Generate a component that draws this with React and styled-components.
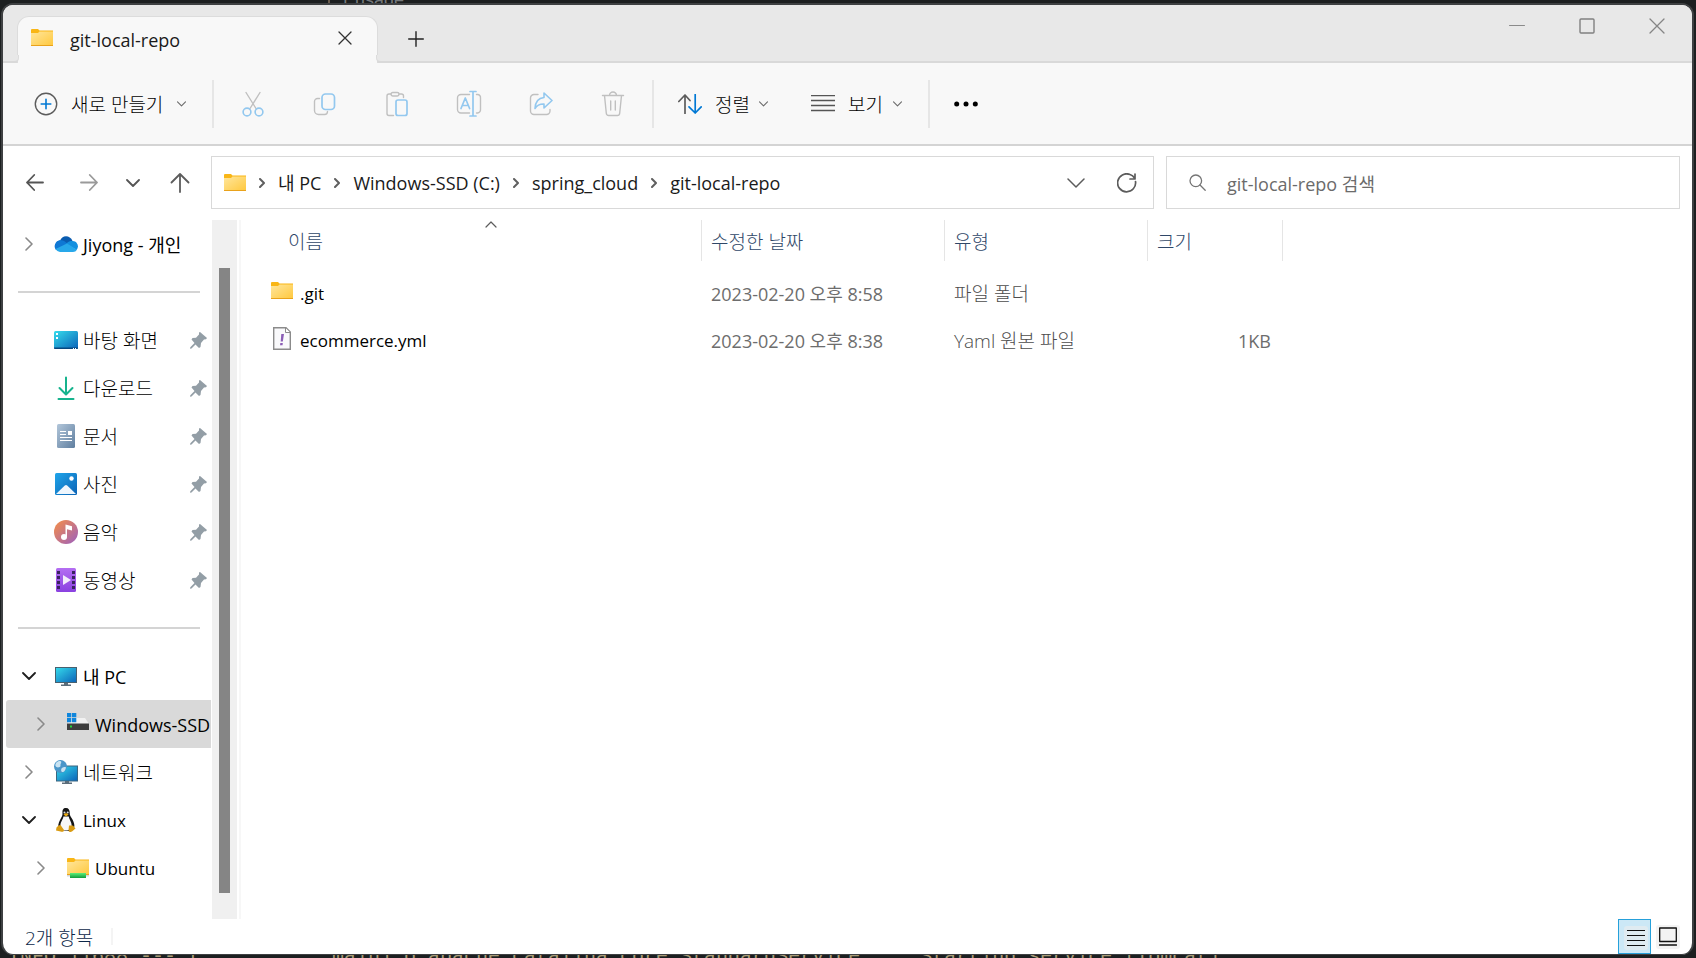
import React from "react";
import styled, { createGlobalStyle } from "styled-components";

const GlobalStyle = createGlobalStyle`
  *, *::before, *::after { box-sizing: border-box; }
  body {
    margin: 0;
    background: #1c1f20;
    color: #1a1a1a;
    font: 18px/24px "Open Sans", "Noto Sans CJK KR", sans-serif;
  }
  button, input { font: inherit; color: inherit; }
  button { margin: 0; padding: 0; border: 0; background: none; }
  ul { list-style: none; margin: 0; padding: 0; }
  svg { display: block; flex: none; }
`;

/* ---------- Desktop and window frame ---------- */

const Desktop = styled.div`
  position: relative;
  display: flex;
  min-height: 100vh;
  padding: 3px 2px 3px 1px;
  overflow: hidden;
`;

const ConsoleLine = styled.pre`
  position: absolute;
  bottom: -11px;
  left: 8px;
  margin: 0;
  color: #a89c78;
  font: 20px/24px "Liberation Mono", monospace;
`;

const UsageHint = styled.span`
  position: absolute;
  top: -12px;
  left: 328px;
  padding-left: 10px;
  border-left: 2px solid #6a5c4e;
  color: #75797c;
  font: 18px/24px "Liberation Sans", sans-serif;
`;

const Window = styled.main`
  position: relative;
  flex: 1;
  min-width: 0;
  display: flex;
  flex-direction: column;
  border: 2px solid #3e4042;
  border-bottom-width: 1px;
  border-radius: 12px;
  background: #fff;
  overflow: hidden;
`;

/* ---------- Title bar ---------- */

const TitleBar = styled.header`
  display: flex;
  height: 58px;
  padding: 11px 0 0 14px;
  border-bottom: 2px solid #d9d9d9;
  background: #e8e8e8;
`;

const Tab = styled.div`
  position: relative;
  display: flex;
  align-items: center;
  width: 361px;
  height: 47px;
  padding: 0 25px 4px 13px;
  border: 1px solid #dcdcdc;
  border-bottom: 0;
  border-radius: 12px 12px 0 0;
  background: #f8f8f8;
  &::before, &::after {
    content: "";
    position: absolute;
    bottom: 0;
    width: 5px;
    height: 8px;
    border-bottom: 2px solid #d9d9d9;
    background: #e8e8e8;
  }
  &::before { left: -4px; border-right: 1px solid #dcdcdc; border-bottom-right-radius: 5px; }
  &::after { right: -4px; border-left: 1px solid #dcdcdc; border-bottom-left-radius: 5px; }
`;

const TabTitle = styled.span`
  flex: 1;
  margin-left: 17px;
  padding-top: 4px;
`;

const NewTabButton = styled.button`
  display: grid;
  place-items: center;
  width: 48px;
  height: 46px;
  margin-left: 14px;
`;

const WindowControls = styled.div`
  display: flex;
  gap: 54px;
  margin: 2px 27px 0 auto;
  height: 16px;
`;

/* ---------- Command bar ---------- */

const Toolbar = styled.div`
  display: flex;
  align-items: center;
  height: 83px;
  border-bottom: 2px solid #d4d4d4;
  background: #f8f8f8;
`;

const MenuButton = styled.button`
  display: flex;
  align-items: center;
  width: ${(p) => p.$width}px;
  height: 48px;
  padding: 0 26px 0 ${(p) => p.$inset}px;
  color: #000;
  font-size: 19px;
  font-weight: 300;
  text-align: left;
  white-space: nowrap;
`;

const MenuLabel = styled.span`
  flex: 1;
  padding: 2px 0 0 13px;
`;

const ToolGroup = styled.div`
  display: flex;
  padding: 0 3px;
`;

const ToolButton = styled.button`
  display: grid;
  place-items: center;
  width: 72px;
  height: 48px;
`;

const ToolSeparator = styled.div`
  width: 2px;
  height: 48px;
  background: #e6e6e6;
`;

/* ---------- Navigation row ---------- */

const NavRow = styled.div`
  display: flex;
  padding: 10px 12px 11px 6px;
`;

const NavButtons = styled.div`
  display: grid;
  grid-template-columns: 52px 56px 32px 62px;
  align-items: center;
  justify-items: center;
`;

const AddressBar = styled.nav`
  flex: 913 1 0;
  display: flex;
  align-items: center;
  height: 53px;
  padding: 0 16px 0 12px;
  border: 1px solid #d9d9d9;
  white-space: nowrap;
`;

const Crumb = styled.a`
  margin: 0 13px;
  color: #1a1a1a;
  text-decoration: none;
`;

const CrumbStart = styled.span`
  margin-right: 13px;
`;

const AddressTools = styled.div`
  display: flex;
  gap: 32px;
  margin-left: auto;
`;

const SearchBox = styled.label`
  flex: 490 1 0;
  display: flex;
  align-items: center;
  gap: 21px;
  height: 53px;
  margin-left: 12px;
  padding-left: 22px;
  border: 1px solid #d9d9d9;
`;

const SearchInput = styled.input`
  flex: 1;
  min-width: 0;
  height: 30px;
  padding: 3px 0 0;
  border: 0;
  outline: 0;
  background: none;
  &::placeholder { color: #6b6b6b; opacity: 1; }
`;

/* ---------- Body ---------- */

const Body = styled.div`
  flex: 1;
  display: flex;
  min-height: 0;
`;

const Sidebar = styled.nav`
  width: 209px;
  padding: 0 1px 27px 3px;
  overflow: hidden;
`;

const TreeRow = styled.li`
  display: flex;
  align-items: center;
  height: 48px;
  padding: 0 ${(p) => (p.$nested ? 0 : 4)}px 0 ${(p) => (p.$nested ? 27 : 15)}px;
  border-radius: 3px 0 0 3px;
  background: ${(p) => (p.$selected ? "#d9d9d9" : "transparent")};
  color: #000;
`;

const TreeToggle = styled.button`
  flex: none;
  display: grid;
  place-items: center;
  width: 16px;
  height: 24px;
`;

const TreeIcon = styled.span`
  flex: none;
  display: grid;
  place-items: center;
  width: 24px;
  height: 24px;
  margin: 0 5px 0 ${(p) => (p.$alone ? 33 : 17)}px;
`;

const TreeLink = styled.a`
  flex: 1;
  min-width: 0;
  padding-top: 2px;
  color: inherit;
  text-decoration: none;
  white-space: nowrap;
  font-size: ${(p) => p.$size}px;
  font-weight: ${(p) => (p.$size === 19 ? 300 : 400)};
`;

const TreeDivider = styled.li`
  height: 48px;
  padding: 23px 11px 0 12px;
  &::before {
    content: "";
    display: block;
    height: 2px;
    background: #d4d4d4;
  }
`;

const ScrollTrack = styled.div`
  width: 25px;
  padding: 48px 7px 26px;
  background: #f0f0f0;
`;

const ScrollThumb = styled.div`
  width: 11px;
  height: 100%;
  background: #858585;
`;

const FilePane = styled.section`
  flex: 1;
  min-width: 0;
  margin-left: 2px;
  border-left: 2px solid #f7f7f7;
`;

const FileTable = styled.table`
  width: 100%;
  table-layout: fixed;
  border-collapse: separate;
  border-spacing: 0;
  color: #6d6d6d;
`;

const HeadCell = styled.th`
  position: relative;
  height: 41px;
  padding: 2px 0 0 ${(p) => (p.$first ? 47 : 9)}px;
  border-right: ${(p) => (p.$last ? 0 : 1)}px solid #e5e5e5;
  color: #2f4768;
  font-size: 19px;
  font-weight: 300;
  text-align: left;
`;

const SortCaret = styled.span`
  position: absolute;
  top: 1px;
  left: 244px;
`;

const HeadGap = styled.tr`
  height: 9px;
`;

const Cell = styled.td`
  height: 47px;
  padding: 0 12px 0 9px;
  color: ${(p) => (p.$size === 19 ? "#4c4c4c" : "inherit")};
  text-align: ${(p) => (p.$right ? "right" : "left")};
  font-size: ${(p) => p.$size || 18}px;
  font-weight: ${(p) => (p.$size === 19 ? 300 : 400)};
  white-space: nowrap;
`;

const FileName = styled.div`
  display: flex;
  align-items: center;
  gap: 6px;
  padding-left: 20px;
  color: #000;
  & > span { display: grid; place-items: center; width: 24px; height: 28px; }
  & > span > svg { margin-top: -5px; }
`;

/* ---------- Status bar ---------- */

const StatusBar = styled.footer`
  display: flex;
  align-items: center;
  height: 35px;
  padding: 0 12px 0 22px;
  color: #0c2748;
  font-size: 19px;
  font-weight: 300;
`;

const StatusText = styled.span`
  padding-top: 2px;
`;

const StatusDivider = styled.div`
  width: 2px;
  height: 17px;
  margin-left: 18px;
  background: #f4f4f4;
`;

const ViewModes = styled.div`
  display: flex;
  align-items: center;
  gap: 5px;
  margin-left: auto;
`;

const ViewButton = styled.button`
  display: grid;
  place-items: center;
  width: ${(p) => (p.$active ? 33 : 24)}px;
  height: ${(p) => (p.$active ? 35 : 24)}px;
  border: ${(p) => (p.$active ? "1px solid #26a0da" : "0")};
  border-radius: ${(p) => (p.$active ? 0 : 3)}px;
  background: ${(p) => (p.$active ? "#cce8f6" : "#f3f3f3")};
`;

const ViewGlyph = styled.span`
  display: grid;
  place-items: center;
  width: 24px;
  height: 24px;
  margin: 3px 0 0 2px;
  border-radius: 3px;
  background: #dfebf1;
`;

/* ---------- Icons ---------- */

const Line = ({ w, h = w, color = "#5c5c5c", sw = 1.4, d, children }) => (
  <svg width={w} height={h} viewBox={`0 0 ${w} ${h}`} fill="none" stroke={color}
    strokeWidth={sw} strokeLinecap="round" strokeLinejoin="round" aria-hidden="true">
    {d && <path d={d} />}
    {children}
  </svg>
);

const FolderIcon = ({ drive }) => (
  <svg width="22" height={drive ? 20 : 18} viewBox={drive ? "0 0 22 20" : "0 0 22 18"} aria-hidden="true">
    <defs>
      <linearGradient id="folder" x1="0" y1="0" x2="1" y2="1">
        <stop offset="0" stopColor="#ffe69c" /><stop offset="1" stopColor="#ffc83d" />
      </linearGradient>
      <linearGradient id="pipe" x1="0" y1="0" x2="0" y2="1">
        <stop offset="0" stopColor="#5df07a" /><stop offset="1" stopColor="#109a3c" />
      </linearGradient>
    </defs>
    <path d="M0 1q0-1 1-1h6l1.500 1.500H22V5H0z" fill="#f9b616" />
    <path d="M0 4h7l1.500-1.500H22V17H0z" fill="url(#folder)" />
    <path d="M0 16h22v1H0z" fill="#e9a21b" />
    {drive && <><path d="M0 17h22v1.500H0z" fill="#d4d7da" /><path d="M3 15h16v5H3z" fill="url(#pipe)" /></>}
  </svg>
);

const YamlIcon = () => (
  <svg width="18" height="23" viewBox="0 0 18 23" aria-hidden="true">
    <path d="M.7.7H13l4.300 4.300v17.300H.7z" fill="#f9f9fb" stroke="#8b8b8b" strokeWidth="1.400" />
    <path d="M12.500 1v4.500H17" fill="#fff" stroke="#8b8b8b" />
    <path d="M8.300 7h2.700l-1.200 7.500H7.700z" fill="#8a5db5" />
    <path d="M7.300 16h2.500l-.3 2.300H7z" fill="#8a5db5" />
  </svg>
);

const ChevronRight = ({ color = "#8a8a8a" }) => <Line w={8} h={14} color={color} sw={1.6} d="M1 1l6 6-6 6" />;
const ChevronOpen = () => <Line w={14} h={8} color="#1f1f1f" sw={1.8} d="M1 1l6 6 6-6" />;
const CrumbChevron = () => <Line w={6} h={10} color="#5f5f5f" sw={2} d="M1 1l4 4-4 4" />;
const SmallChevron = () => <Line w={9} h={6} color="#6b6b6b" sw={1.1} d="M.5.8l4 4 4-4" />;
const CloseIcon = ({ size, color }) => <Line w={size} color={color} sw={1.3} d={`M1 1l${size - 2} ${size - 2}M${size - 1} 1L1 ${size - 1}`} />;

const NewIcon = () => (
  <Line w={24}><circle cx="12" cy="12" r="10.700" /><path d="M12 7.200v9.600M7.200 12h9.600" stroke="#0078d4" strokeWidth="1.600" /></Line>
);

const GREY = "#c0c0c0";
const BLUE = "#93c8ef";

const CutIcon = () => (
  <Line w={24} h={26} color={GREY}>
    <path d="M5 1.500l10.300 16.500M19 1.500L8.700 18" />
    <g stroke={BLUE} strokeWidth="1.600"><circle cx="6" cy="21" r="3.900" /><circle cx="18" cy="21" r="3.900" /></g>
  </Line>
);
const CopyIcon = () => (
  <Line w={24} color={GREY}>
    <path d="M6.500 6.500h-2a3 3 0 0 0-3 3v9a4 4 0 0 0 4 4h6a3 3 0 0 0 3-3" />
    <rect x="9" y="2" width="12.500" height="15.500" rx="3.500" stroke={BLUE} strokeWidth="1.700" />
  </Line>
);
const PasteIcon = () => (
  <Line w={24} h={26} color={GREY}>
    <path d="M6 3H4a2 2 0 0 0-2 2v17.500a2 2 0 0 0 2 2h4.500M14 3h2.500a2 2 0 0 1 2 2v1.500" />
    <rect x="6" y="1.500" width="8" height="3.500" rx="1.700" />
    <rect x="11" y="9" width="11" height="15.500" rx="2" stroke={BLUE} strokeWidth="1.700" />
  </Line>
);
const RenameIcon = () => (
  <Line w={26} h={28} color={GREY}>
    <path d="M13.500 4.500H5A3.500 3.500 0 0 0 1.500 8v11.500A3.500 3.500 0 0 0 5 23h8.500M20.500 4.500h1A3 3 0 0 1 24.500 8v11.500a3.200 3.200 0 0 1-3 3.500h-1" />
    <path d="M14 1.500h6M17 1.500v24.500M14 26h6M5 18.500L9.300 8l4.300 10.500M6.500 15.500h5.700" stroke={BLUE} strokeWidth="1.700" />
  </Line>
);
const ShareIcon = () => (
  <Line w={24} h={26} color={GREY}>
    <path d="M9 3.500H5A3.500 3.500 0 0 0 1.500 7v13A3.500 3.500 0 0 0 5 23.500h12.500a3.500 3.500 0 0 0 3.500-3.500v-1.500" />
    <path d="M15 2l8 7.500-8 7.500v-4c-4-.2-7 1.300-9 4.500.300-6.500 3.500-10.500 9-11z" stroke={BLUE} strokeWidth="1.600" />
  </Line>
);
const TrashIcon = () => (
  <Line w={24} h={26} color={GREY}>
    <path d="M1.500 4.500h21M8.500 4.500a3.500 3.500 0 0 1 7 0M3.500 4.500l1.800 17.800a2.400 2.400 0 0 0 2.400 2.200h8.600a2.400 2.400 0 0 0 2.400-2.200l1.800-17.800M9.700 10v9M14.300 10v9" />
  </Line>
);
const SortIcon = () => (
  <Line w={24} h={20} sw={1.7}>
    <path d="M7 19.500V1M.8 7.500L7 1l5 5.500" />
    <path d="M17.200.5V19M11 12.800l6.200 6.200 6-6.200" stroke="#0078d4" />
  </Line>
);
const LinesIcon = ({ w, h, color, thickness }) => (
  <svg width={w} height={h} viewBox={`0 0 ${w} ${h}`} stroke={color} strokeWidth={thickness} aria-hidden="true">
    {[0, 1, 2, 3].map((i) => <path key={i} d={`M0 ${0.5 + i * 5}h${w}`} />)}
  </svg>
);

const ArrowIcon = ({ color, flip }) => <Line w={18} h={17} color={color} sw={1.8} d={flip ? "M1 8.500h16M9.800 1l7.200 7.500-7.200 7.500" : "M17 8.500H1M8.200 1L1 8.500 8.200 16"} />;

const OneDriveIcon = () => (
  <svg width="24" height="16" viewBox="0 0 24 16" aria-hidden="true">
    <path d="M6 5C7.500-1 16-1.500 18.500 5l-5 5z" fill="#0a5cb0" />
    <path d="M6 4.300A6 6 0 0 0 2 14l10-5z" fill="#0f78d4" />
    <path d="M6 4.300c3-.5 5 1 8 4L3 14A6 6 0 0 1 6 4.300z" fill="#0f78d4" />
    <path d="M18.500 5a5.400 5.400 0 0 1 4 9L12 8c2-2.500 4-3 6.500-3z" fill="#1490df" />
    <path d="M1.500 13L13 7.500 23 13.700A5 5 0 0 1 19 16H6a6 6 0 0 1-4.500-3z" fill="#28a8ea" />
  </svg>
);
const ScreenGradient = () => (
  <defs><linearGradient id="screen" x1="0" y1="0" x2="1" y2="1"><stop offset="0" stopColor="#35dcec" /><stop offset="1" stopColor="#0b62b8" /></linearGradient></defs>
);
const DesktopIcon = () => (
  <svg width="24" height="18" viewBox="0 0 24 18" aria-hidden="true">
    <ScreenGradient />
    <rect width="24" height="18" rx="1.500" fill="url(#screen)" />
    <path d="M0 16.500h24V17a1 1 0 0 1-1 1H1a1 1 0 0 1-1-1z" fill="#07477f" />
    <path d="M2 2h2v2H2zM2 6h2v2H2zM19 17h1v1h-1zM21 17h1v1h-1z" fill="#fff" />
  </svg>
);
const DownloadIcon = () => <Line w={18} h={24} color="#16b38d" sw={2} d="M9 1.500V18M2.500 12L9 18.500l6.500-6.500M1.500 23h15" />;
const DocumentIcon = () => (
  <svg width="18" height="24" viewBox="0 0 18 24" aria-hidden="true">
    <defs><linearGradient id="doc" x1="0" y1="0" x2="1" y2="1"><stop offset="0" stopColor="#b2c6da" /><stop offset="1" stopColor="#5f7e9f" /></linearGradient></defs>
    <rect width="18" height="24" rx="1.500" fill="url(#doc)" />
    <path d="M3 7h6v1H3zM3 10h6v1H3zM3 13h12v1H3zM3 16h12v1H3zM11 7h4v4h-4z" fill="#fff" />
  </svg>
);
const PictureIcon = () => (
  <svg width="22" height="22" viewBox="0 0 22 22" aria-hidden="true">
    <defs><linearGradient id="pic" x1="0" y1="0" x2="1" y2="1"><stop offset="0" stopColor="#1fa5ea" /><stop offset="1" stopColor="#0b63b5" /></linearGradient></defs>
    <rect width="22" height="22" rx="1.500" fill="url(#pic)" />
    <path d="M1 21l8.800-8.500q1.200-1 2.400 0L21 21z" fill="#eef6fd" />
    <circle cx="16.500" cy="5.500" r="2.200" fill="#fff" />
  </svg>
);
const MusicIcon = () => (
  <svg width="24" height="24" viewBox="0 0 24 24" aria-hidden="true">
    <defs><linearGradient id="mus" x1="0" y1="0" x2="1" y2="1"><stop offset="0" stopColor="#f78f45" /><stop offset="1" stopColor="#9b5fc0" /></linearGradient></defs>
    <circle cx="12" cy="12" r="12" fill="url(#mus)" />
    <circle cx="10" cy="17" r="3" fill="#fff" />
    <path d="M11.500 17V4.500l6.500 1.700v4.300l-5-1.300V17z" fill="#fff" />
  </svg>
);
const VideoIcon = () => (
  <svg width="20" height="24" viewBox="0 0 20 24" aria-hidden="true">
    <defs><linearGradient id="vid" x1="0" y1="0" x2="0" y2="1"><stop offset="0" stopColor="#b46ef2" /><stop offset="1" stopColor="#8a41e0" /></linearGradient></defs>
    <rect width="20" height="24" rx="1.500" fill="url(#vid)" />
    {[3, 8, 13, 18].map((y) => <path key={y} d={`M1 ${y}h3v3H1zM16 ${y}h3v3h-3z`} fill="#3a2360" />)}
    <path d="M7 7l8 5-8 5z" fill="#f3ecfb" />
  </svg>
);
const MonitorIcon = () => (
  <svg width="22" height="19" viewBox="0 0 22 19" aria-hidden="true">
    <ScreenGradient />
    <rect x=".5" y=".5" width="21" height="15" fill="url(#screen)" stroke="#48606f" />
    <path d="M9 16h4v1.500h3V19H6v-1.500h3z" fill="#5c6d7a" />
  </svg>
);
const DriveIcon = () => (
  <svg width="22" height="22" viewBox="0 0 22 22" aria-hidden="true">
    <path d="M3 7l2-2h13l4 6H0z" fill="#f1f1f1" />
    <path d="M0 10.500h22V17H0z" fill="#3d3d3d" />
    <path d="M3 12.500h2v2H3z" fill="#23d43a" />
    <path d="M0 0h4.300v4.300H0zM5 0h4.300v4.300H5zM0 5h4.300v4.300H0zM5 5h4.300v4.300H5z" fill="#0f86dc" />
  </svg>
);
const NetworkIcon = () => (
  <svg width="24" height="24" viewBox="0 0 24 24" aria-hidden="true">
    <ScreenGradient />
    <rect x="2.500" y="6" width="21" height="15" fill="url(#screen)" stroke="#3c6680" />
    <path d="M11 21h4v1.500h3V24H8v-1.500h3z" fill="#5c6d7a" />
    <circle cx="6.500" cy="6.500" r="6.500" fill="#4a96c9" />
    <path d="M2 3c2-2 4-2.500 5-1.500S6 4 6.500 5.500 4 8 2.500 7 1 5 2 3zM8 8c2-1.500 4-1 4-.5s-1 4-3 4.500-2.500-3-1-4z" fill="#c9e3f2" />
  </svg>
);
const TuxIcon = () => (
  <svg width="20" height="24" viewBox="0 0 20 24" aria-hidden="true">
    <path d="M10 0c-3 0-3.700 2-3.500 5 .2 3-1 4-2.500 7-1.500 3-2.500 6-1 8.500l6 2.500h5l4-3c1-2.500 0-5.500-1.500-8.500S13.600 8 13.700 5c.1-3-1-5-3.700-5z" fill="#151515" />
    <path d="M7.500 8.500h5.200c.3 2.500 3 5.500 3 9 0 3-2.700 5-5.700 5s-5.700-2-5.700-5c0-3.500 2.900-6.500 3.200-9z" fill="#f7f7f7" />
    <circle cx="8.500" cy="4.500" r="1" fill="#ddd" /><circle cx="11.700" cy="4.500" r="1" fill="#ddd" />
    <path d="M7.500 6.500L10 5l2.700 1.500L10 8.500z" fill="#e8a90f" />
    <path d="M2.500 17.500l2-.5 3.500 5c0 2-2 2-3.500 1.500L0 22.500l.5-3zM17 17.500l2.500 3-3.500 3c-2 1-3.300.5-3.500-1l.5-5z" fill="#d99b12" />
  </svg>
);
const PinIcon = () => (
  <svg width="17" height="17" viewBox="0 0 17 17" aria-hidden="true">
    <path d="M9 .5l1-.5 7 6-1 1.200-2 .3-3 3.500-.5 4L9 16l-3.500-3.500L1.500 16.500 0 16.800l.3-1.500L4.500 11 1.500 7.500l1-1.500 3.500-.3L9 2.500z" fill="#939ea6" />
  </svg>
);

/* ---------- Data ---------- */

const TREE = [
  { label: "Jiyong - 개인", Icon: OneDriveIcon, toggle: "closed", size: 18 },
  { divider: true },
  { label: "바탕 화면", Icon: DesktopIcon, pin: true, size: 19 },
  { label: "다운로드", Icon: DownloadIcon, pin: true, size: 19 },
  { label: "문서", Icon: DocumentIcon, pin: true, size: 19 },
  { label: "사진", Icon: PictureIcon, pin: true, size: 19 },
  { label: "음악", Icon: MusicIcon, pin: true, size: 19 },
  { label: "동영상", Icon: VideoIcon, pin: true, size: 19 },
  { divider: true },
  { label: "내 PC", Icon: MonitorIcon, toggle: "open", size: 18 },
  { label: "Windows-SSD", Icon: DriveIcon, toggle: "closed", nested: true, selected: true, size: 18 },
  { label: "네트워크", Icon: NetworkIcon, toggle: "closed", size: 19 },
  { label: "Linux", Icon: TuxIcon, toggle: "open", size: 17 },
  { label: "Ubuntu", Icon: () => <FolderIcon drive />, toggle: "closed", nested: true, size: 17 },
];

const TOOLS = [
  ["잘라내기", CutIcon],
  ["복사", CopyIcon],
  ["붙여넣기", PasteIcon],
  ["이름 바꾸기", RenameIcon],
  ["공유", ShareIcon],
  ["삭제", TrashIcon],
];

const CRUMBS = ["내 PC", "Windows-SSD (C:)", "spring_cloud", "git-local-repo"];

const FILES = [
  { name: ".git", date: "2023-02-20 오후 8:58", type: "파일 폴더", size: "", Icon: FolderIcon },
  { name: "ecommerce.yml", date: "2023-02-20 오후 8:38", type: "Yaml 원본 파일", size: "1KB", Icon: YamlIcon },
];

export default function App() {
  return (
    <Desktop>
      <GlobalStyle />
      <UsageHint aria-hidden="true">1 usage</UsageHint>
      <ConsoleLine aria-hidden="true">
        {"INFO 11688 --- [           main] o.apache.catalina.core.StandardService   : Starting service [Tomcat]"}
      </ConsoleLine>
      <Window>
        <TitleBar>
          <Tab>
            <FolderIcon />
            <TabTitle>git-local-repo</TabTitle>
            <button aria-label="탭 닫기"><CloseIcon size={14} color="#333" /></button>
          </Tab>
          <NewTabButton aria-label="새 탭"><Line w={16} color="#222" d="M8 .7v14.600M.7 8h14.600" /></NewTabButton>
          <WindowControls>
            <button aria-label="최소화"><Line w={16} color="#8a8a8a" sw={1} d="M.5 7.500h15" /></button>
            <button aria-label="최대화"><Line w={16} color="#808080"><rect x="1" y="1" width="14" height="14" rx="1" /></Line></button>
            <button aria-label="닫기"><CloseIcon size={16} color="#858585" /></button>
          </WindowControls>
        </TitleBar>

        <Toolbar>
          <MenuButton $width={209} $inset={31}><NewIcon /><MenuLabel>새로 만들기</MenuLabel><SmallChevron /></MenuButton>
          <ToolSeparator />
          <ToolGroup>
            {TOOLS.map(([label, Icon]) => <ToolButton key={label} aria-label={label}><Icon /></ToolButton>)}
          </ToolGroup>
          <ToolSeparator />
          <MenuButton $width={140} $inset={24}><SortIcon /><MenuLabel>정렬</MenuLabel><SmallChevron /></MenuButton>
          <MenuButton $width={134} $inset={17}><LinesIcon w={24} h={17} color="#555" thickness={1.4} /><MenuLabel>보기</MenuLabel><SmallChevron /></MenuButton>
          <ToolSeparator />
          <ToolButton aria-label="자세히">
            <svg width="24" height="6" viewBox="0 0 24 6" aria-hidden="true">
              <circle cx="2.700" cy="3" r="2.500" /><circle cx="12" cy="3" r="2.500" /><circle cx="21.300" cy="3" r="2.500" />
            </svg>
          </ToolButton>
        </Toolbar>

        <NavRow>
          <NavButtons>
            <button aria-label="뒤로"><ArrowIcon color="#555" /></button>
            <button aria-label="앞으로"><ArrowIcon color="#9a9a9a" flip /></button>
            <button aria-label="최근 위치"><Line w={14} h={8} color="#555" sw={1.8} d="M1 1l6 6 6-6" /></button>
            <button aria-label="위로"><Line w={20} h={20} sw={1.8} d="M10 19V1M1.500 9.500L10 1l8.500 8.500" /></button>
          </NavButtons>
          <AddressBar aria-label="주소">
            <CrumbStart><FolderIcon /></CrumbStart>
            {CRUMBS.map((name) => (
              <React.Fragment key={name}><CrumbChevron /><Crumb href="#">{name}</Crumb></React.Fragment>
            ))}
            <AddressTools>
              <button aria-label="주소 기록"><Line w={18} h={10} sw={1.5} d="M1 1l8 8 8-8" /></button>
              <button aria-label="새로 고침">
                <Line w={20} sw={1.7} d="M18.500 8.500A9 9 0 1 1 13 1.500q3 .8 4.500 3.500M18 1v5h-5" />
              </button>
            </AddressTools>
          </AddressBar>
          <SearchBox>
            <Line w={17} color="#757575" sw={1.3}><circle cx="6.800" cy="6.800" r="5.800" /><path d="M11 11l5.200 5.200" /></Line>
            <SearchInput type="text" aria-label="검색" placeholder="git-local-repo 검색" />
          </SearchBox>
        </NavRow>

        <Body>
          <Sidebar aria-label="탐색 창">
            <ul>
              {TREE.map((item, i) => item.divider ? <TreeDivider key={i} /> : (
                <TreeRow key={i} $nested={item.nested} $selected={item.selected}>
                  {item.toggle && (
                    <TreeToggle aria-label={`${item.label} 펼치기`}>
                      {item.toggle === "open" ? <ChevronOpen /> : <ChevronRight />}
                    </TreeToggle>
                  )}
                  <TreeIcon $alone={!item.toggle}><item.Icon /></TreeIcon>
                  <TreeLink href="#" $size={item.size}>{item.label}</TreeLink>
                  {item.pin && <PinIcon />}
                </TreeRow>
              ))}
            </ul>
          </Sidebar>
          <ScrollTrack><ScrollThumb /></ScrollTrack>
          <FilePane>
            <FileTable>
              <colgroup>
                <col style={{ width: 461 }} /><col style={{ width: 243 }} /><col style={{ width: 203 }} /><col style={{ width: 135 }} /><col />
              </colgroup>
              <thead>
                <tr>
                  <HeadCell $first>이름<SortCaret><Line w={12} h={7} sw={1.2} d="M1 6l5-5 5 5" /></SortCaret></HeadCell>
                  <HeadCell>수정한 날짜</HeadCell>
                  <HeadCell>유형</HeadCell>
                  <HeadCell>크기</HeadCell>
                  <HeadCell as="td" $last />
                </tr>
              </thead>
              <tbody>
                <HeadGap />
                {FILES.map((f) => (
                  <tr key={f.name}>
                    <Cell $size={17}><FileName><span><f.Icon /></span>{f.name}</FileName></Cell>
                    <Cell>{f.date}</Cell>
                    <Cell $size={19}>{f.type}</Cell>
                    <Cell $right>{f.size}</Cell>
                    <Cell />
                  </tr>
                ))}
              </tbody>
            </FileTable>
          </FilePane>
        </Body>

        <StatusBar>
          <StatusText>2개 항목</StatusText>
          <StatusDivider />
          <ViewModes>
            <ViewButton $active aria-label="자세히 보기">
              <ViewGlyph><LinesIcon w={18} h={16} color="#111" thickness={1} /></ViewGlyph>
            </ViewButton>
            <ViewButton aria-label="큰 아이콘 보기">
              <Line w={18} h={19} color="#111" sw={1.3}><rect x=".7" y="1" width="16.600" height="13.500" /><path d="M.5 18h17" /></Line>
            </ViewButton>
          </ViewModes>
        </StatusBar>
      </Window>
    </Desktop>
  );
}
